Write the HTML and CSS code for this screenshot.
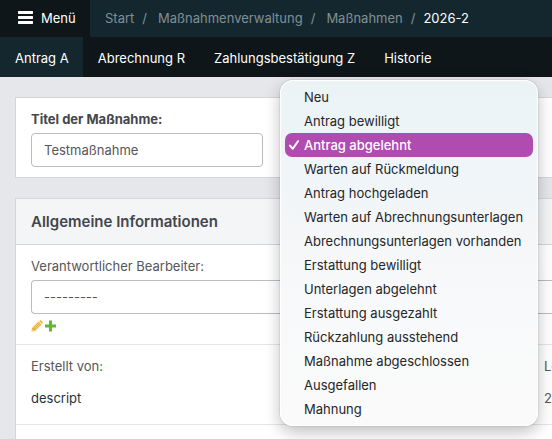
FILE: index.html
```html
<!DOCTYPE html>
<html lang="de">
<head>
<meta charset="utf-8">
<title>2026-2</title>
<link rel="stylesheet" href="styles.css">
</head>
<body>
<header class="topbar">
  <button class="menu-button" type="button">
    <svg class="menu-icon" viewBox="0 0 15 13" aria-hidden="true"><path d="M.5 0h14l.5.5v2l-.5.5H.5L0 2.500v-2zM.5 5h14l.5.5v2l-.5.5H.5L0 7.500v-2zM.5 10h14l.5.5v2l-.5.5H.5l-.5-.5v-2z"/></svg>
    Menü
  </button>
  <nav class="breadcrumbs">
    <a href="#">Start</a><span class="slash">/</span>
    <a href="#">Maßnahmenverwaltung</a><span class="slash">/</span>
    <a href="#">Maßnahmen</a><span class="slash last">/</span>
    <span class="current">2026-2</span>
  </nav>
</header>
<nav class="tabs">
  <a class="tab active" href="#">Antrag A</a>
  <a class="tab" href="#">Abrechnung R</a>
  <a class="tab" href="#">Zahlungsbestätigung Z</a>
  <a class="tab" href="#">Historie</a>
</nav>
<main class="content">
  <section class="card title-card">
    <label class="label strong" for="title">Titel der Maßnahme:</label>
    <input class="control short" id="title" type="text" value="Testmaßnahme">
  </section>
  <section class="card info-card">
    <h2 class="card-heading">Allgemeine Informationen</h2>
    <div class="row editor-row">
      <label class="label" for="editor">Verantwortlicher Bearbeiter:</label>
      <select class="control open-end" id="editor"><option>---------</option></select>
      <div class="actions">
        <button class="icon-button" type="button" aria-label="Bearbeiten">
          <svg viewBox="0 0 12 12"><path fill="#efb02e" d="M1 8 7.500 1.500 10.500 4.500 4 11 .5 11.500z"/><path fill="#efb02e" d="M8.200.9 9 .2Q9.500-.1 10 .4L11.600 2Q12 2.500 11.700 3L11 3.800z"/><path fill="none" stroke="#fbe3a8" stroke-width=".7" d="M2.800 8 8 2.800M4 9.200 9.200 4"/><path fill="#fff" d="M1.400 9.300 2.700 10.600 1.300 10.800z"/></svg>
        </button>
        <button class="icon-button" type="button" aria-label="Hinzufügen">
          <svg viewBox="0 0 12 12"><path fill="#5fb832" d="M5 .5h3v4h4v3H8v4H5v-4H1v-3h4z"/></svg>
        </button>
      </div>
    </div>
    <dl class="row facts">
      <div><dt>Erstellt von:</dt><dd><a href="#">descript</a></dd></div>
      <div class="fact-end"><dt>Le</dt><dd>2</dd></div>
    </dl>
  </section>
</main>
<ul class="popup" role="listbox" aria-label="Status">
  <li role="option">Neu</li>
  <li role="option">Antrag bewilligt</li>
  <li role="option" class="selected" aria-selected="true"><svg class="check" viewBox="0 0 10 10" aria-hidden="true"><path d="M1 5.600 3.800 8.800 9 1.200"/></svg>Antrag abgelehnt</li>
  <li role="option">Warten auf Rückmeldung</li>
  <li role="option">Antrag hochgeladen</li>
  <li role="option">Warten auf Abrechnungsunterlagen</li>
  <li role="option">Abrechnungsunterlagen vorhanden</li>
  <li role="option">Erstattung bewilligt</li>
  <li role="option">Unterlagen abgelehnt</li>
  <li role="option">Erstattung ausgezahlt</li>
  <li role="option">Rückzahlung ausstehend</li>
  <li role="option">Maßnahme abgeschlossen</li>
  <li role="option">Ausgefallen</li>
  <li role="option">Mahnung</li>
</ul>
</body>
</html>
```

FILE: styles.css
```css
* { box-sizing: border-box; }
html { overflow: hidden; }
body {
  margin: 0;
  background: #e6e7eb;
  color: #55565a;
  font: 13px/16px Inter, "Liberation Sans", sans-serif;
}
a { color: inherit; text-decoration: none; }
button, input, select { font: inherit; }

.topbar {
  display: flex;
  height: 37px;
  background: #14272e;
  color: #809096;
}
.menu-button {
  display: flex;
  align-items: center;
  gap: 8px;
  width: 90px;
  padding: 0 0 2px 18px;
  border: 0;
  background: #0e1619;
  color: #fff;
}
.menu-icon { width: 15px; height: 13px; fill: #fff; }
.breadcrumbs {
  display: flex;
  align-items: center;
  padding: 0 0 2px 15px;
  white-space: nowrap;
}
.slash { margin: 0 11px 0 8px; }
.slash.last { margin-right: 8px; }
.current { color: #fff; }

.tabs {
  display: flex;
  height: 40px;
  background: #0e1619;
  color: #fff;
}
.tab { padding: 13px 14px 11px 15px; white-space: nowrap; }
.tab.active { background: #14272e; }

.content {
  display: flex;
  flex-direction: column;
  gap: 20px;
  padding: 20px 0 0 15px;
}
.card {
  border: 1px solid #d5d6da;
  border-right: 0;
  background: #fff;
}
.title-card { padding: 13px 15px 10px; }
.info-card { padding-bottom: 32px; }
.label { display: block; margin-bottom: 6px; }
.strong { font-weight: 700; color: #43464c; }
.control {
  display: block;
  height: 34px;
  padding: 0 12px;
  border: 1px solid #bbbcbe;
  border-radius: 4px;
  background: #fff;
  color: #55565a;
  appearance: none;
}
.short { width: 232px; }
.open-end {
  width: 100%;
  border-right: 0;
  border-radius: 4px 0 0 4px;
}
.card-heading {
  margin: 0;
  padding: 13px 15px 12px;
  border-bottom: 1px solid #d5d6da;
  background: #f4f5f7;
  color: #43464c;
  font-size: 15px;
  line-height: 20px;
  font-weight: 600;
}
.row { margin: 0; border-bottom: 1px solid #e5e5e6; }
.editor-row { padding: 13px 0 12px 15px; }
.actions { display: flex; gap: 1px; margin-top: 6px; }
.icon-button {
  width: 12px;
  height: 12px;
  padding: 0;
  border: 0;
  background: none;
}
.icon-button svg { display: block; width: 12px; height: 12px; }
.facts {
  display: flex;
  justify-content: space-between;
  padding: 13px 0 18px 15px;
}
.facts dd { margin: 16px 0 0; color: #1c333a; }
.fact-end { width: 8px; }
.facts .fact-end dd { color: #55565a; }

.popup {
  position: absolute;
  top: 80px;
  left: 280px;
  width: 258px;
  margin: 0;
  padding: 5px;
  border-radius: 13px;
  background: linear-gradient(#ebf3f5, #eff5f9 25%, #f4f6f8 42%, #f8f9fa 65%, #fafafa);
  box-shadow: 0 0 1px rgba(0, 0, 0, .6), 0 6px 16px rgba(0, 0, 0, .25), inset 0 0 1px 1px #fff;
  color: #242628;
  list-style: none;
  white-space: nowrap;
}
.popup li {
  display: flex;
  align-items: center;
  height: 24px;
  padding-left: 19px;
}
.popup .selected {
  gap: 5px;
  padding-left: 4px;
  border-radius: 7px;
  background: #b04bb0;
  color: #fff;
  font-weight: 500;
}
.check {
  width: 10px;
  height: 10px;
  fill: none;
  stroke: #fff;
  stroke-width: 2;
  stroke-linecap: round;
  stroke-linejoin: round;
}
```
